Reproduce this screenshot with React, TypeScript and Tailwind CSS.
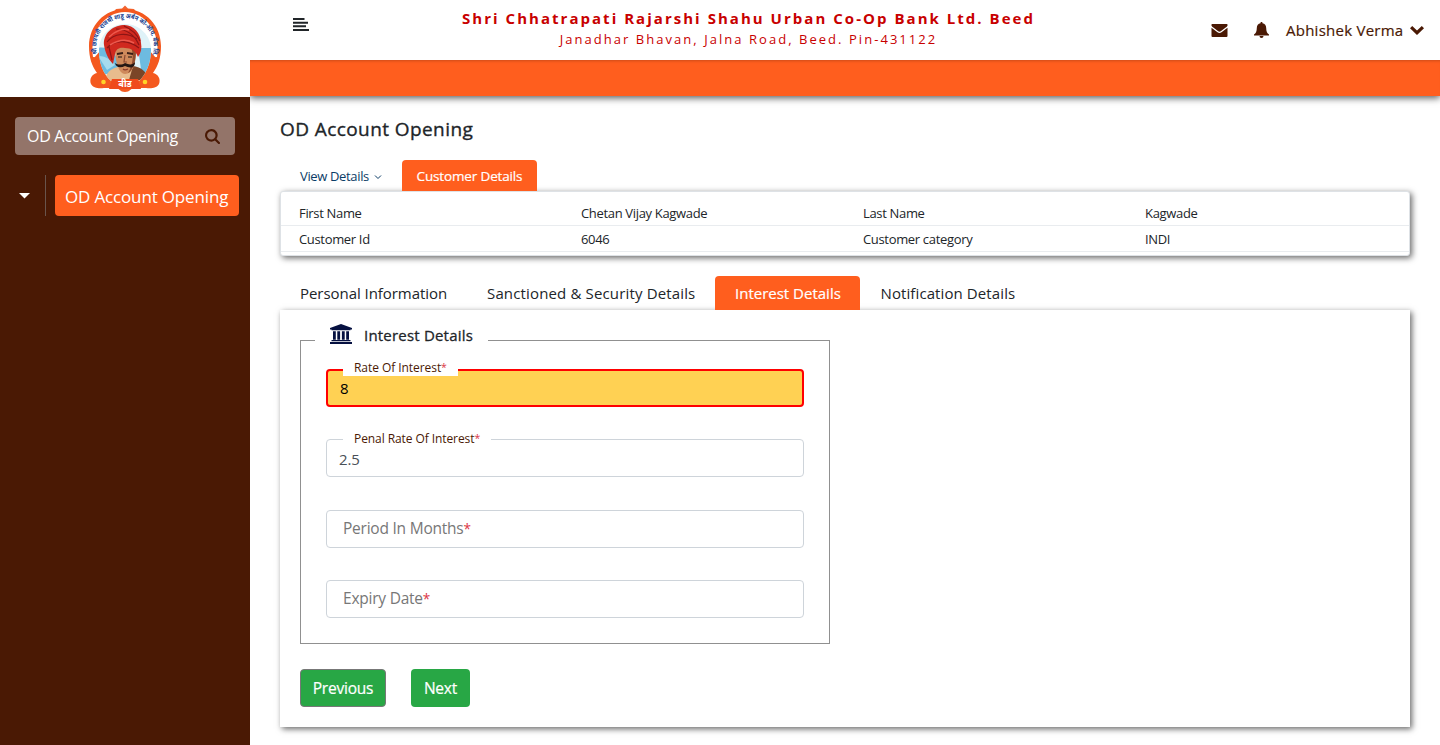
import type { ReactNode } from "react";

function Glyph({ className, viewBox, children }: { className: string; viewBox: string; children: ReactNode }) {
  return (
    <svg className={className} viewBox={viewBox} fill="currentColor">
      {children}
    </svg>
  );
}

function Logo() {
  return (
    <svg width="74" height="90" viewBox="0 0 74 90" overflow="visible">
      <path d="M37 1.500l3 3 6 .500 3 4H25l3-4 6-.500z" fill="#f26430" />
      <path
        d="M37 5C16 5 1 22 1 42c0 12 3 20 8 27-5 1-8 6-6 11 2 4 8 5 13 4h12c3 0 4 4 9 4s6-4 9-4h12c5 1 11 0 13-4 2-5-1-10-6-11 5-7 8-15 8-27C73 22 58 5 37 5z"
        fill="#f4591f"
      />
      <path d="M5 53C1 28 17 8 37 8s36 20 32 45l-9 1H14z" fill="#fff" />
      <path d="M6 54l7-8 4 26C11 68 7 61 6 54zM68 54l-7-8-4 26c6-4 10-11 11-18z" fill="#f4591f" />
      <clipPath id="portrait">
        <path d="M11 46c0-15 12-26 26-26s26 11 26 26c0 13-5 24-12 31H23C15 70 11 59 11 46z" />
      </clipPath>
      <g clipPath="url(#portrait)">
        <rect x="10" y="18" width="54" height="60" fill="#dff2f8" />
        <path d="M10 44c10-2 16 4 20 12v14H10zM50 44h14v26l-10 2z" fill="#6dbbe0" />
        <path d="M10 52c8 0 13 4 17 9l-8 5z" fill="#a7dbed" />
        <path d="M16 78c2-9 6-13 14-15l8 6 9-5c8 2 13 6 15 15z" fill="#e8bc8d" />
        <path d="M45 62c7 1 13 4 16 14H41z" fill="#7b4527" />
        <path d="M27 44c0-5 5-7 10-7s11 3 11 10c0 14-4 23-11 23-6 0-10-12-10-26z" fill="#cf8a5c" />
        <path d="M43 43c3 8 2 17-3 26 5-2 8-12 8-23z" fill="#8f4c2e" />
        <path d="M29 50l6-1M39 49l6 1" stroke="#3a1d16" strokeWidth="1.800" />
        <path d="M30 53h4M40 53h4" stroke="#1f1412" strokeWidth="1.200" />
        <path d="M37 51l-1 7h3" fill="none" stroke="#8d4930" strokeWidth="1.200" />
        <path d="M27 59c3 2 7 2 10 0 4 2 8 2 10-1 0 7-6 6-10 4-4 2-9 2-10-3z" fill="#241714" />
        <path d="M35 65c1 1 3 1 5 0" stroke="#8d3b2b" strokeWidth="1.200" fill="none" />
      </g>
      <path
        d="M16 41c-1-11 8-19 19-20 10-1 18 8 18 18 1 5 0 10-3 14-2-6-7-9-13-9-6-1-9 1-10 6l-2 10c-5-5-8-12-9-19z"
        fill="#d0291f"
      />
      <path d="M19 38c7-9 20-10 30-3M19 44c8-9 22-8 32 0M28 25c9 0 18 5 23 16M36 22c7 3 13 8 16 15M21 43l3 13" fill="none" stroke="#8d1515" strokeWidth="1.200" />
      <path d="M21 33c6-6 14-9 20-7M22 41c8-5 17-6 24-2" fill="none" stroke="#ee594d" strokeWidth="1.500" />
      <path id="arc" d="M9.500 51A28.700 28.700 0 1 1 64.500 51" fill="none" />
      <text fill="#173f91" fontSize="6.500" fontWeight="700" fontFamily="Noto Sans, sans-serif">
        <textPath href="#arc" startOffset="1" textLength="106" lengthAdjust="spacingAndGlyphs">
          श्री छत्रपती राजर्षी शाहू अर्बन को-ऑप. बँक लि.
        </textPath>
      </text>
      <circle cx="15.500" cy="78" r="2.300" fill="#ffd528" />
      <circle cx="57" cy="78" r="2.300" fill="#ffd528" />
      <path d="M24 75h26l3 10H21z" fill="#ef4a1b" />
      <text x="37" y="83" textAnchor="middle" fill="#fff" fontSize="9" fontWeight="700" fontFamily="Noto Sans, sans-serif">
        बीड
      </text>
    </svg>
  );
}

function Sidebar() {
  return (
    <aside className="relative z-20 flex w-[250px] shrink-0 flex-col bg-[#4a1904]">
      <div className="flex h-[97px] justify-center bg-white pt-[4px]">
        <Logo />
      </div>
      <div className="mx-[15px] mt-[20px] flex h-[38px] items-center justify-between rounded bg-[#937469] pr-[15px] pl-[12px] text-[16px] text-white">
        <span className="tracking-[-0.300px]">OD Account Opening</span>
        <Glyph className="size-[15px] text-[#4a1904]" viewBox="0 0 15 15">
          <path d="M6.300 0a6.300 6.300 0 1 0 3.600 11.500l3.300 3.200a1 1 0 0 0 1.500-1.500l-3.200-3.300A6.300 6.300 0 0 0 6.300 0zm0 2.200a4.200 4.200 0 1 1 0 8.400 4.200 4.200 0 0 1 0-8.400z" />
        </Glyph>
      </div>
      <div className="mt-[20px] flex h-[41px]">
        <div className="flex w-[46px] items-center border-r border-[#69544c] pl-[19px]">
          <svg width="11" height="6" viewBox="0 0 11 6">
            <path d="M0 0h11L5.500 5.500z" fill="#fff" />
          </svg>
        </div>
        <button className="ml-[9px] flex w-[184px] items-center rounded bg-[#ff5e1e] pt-[3px] pl-[10px] text-[17px] tracking-[-0.160px] whitespace-nowrap text-white">
          OD Account Opening
        </button>
      </div>
    </aside>
  );
}

function Header() {
  return (
    <header className="relative z-10 shadow-[0_2px_7px_rgba(0,0,0,0.65)]">
      <div className="flex h-[60px] items-start bg-white">
        <Glyph className="mt-[18px] ml-[43px] h-[13px] w-[16px] text-[#212529]" viewBox="0 0 16 13">
          <path d="M0 0h11.500v2H0zM0 3.700h15v2H0zM0 7.300h13v2H0zM0 11h16v2H0z" />
        </Glyph>
        <div className="ml-[152px] flex w-[575px] flex-col items-center pt-[8px] whitespace-nowrap text-[#c80000]">
          <b className="text-[15px] leading-[21px] tracking-[2.030px]">Shri Chhatrapati Rajarshi Shahu Urban Co-Op Bank Ltd. Beed</b>
          <span className="text-[13px] leading-[21px] tracking-[2.040px]">Janadhar Bhavan, Jalna Road, Beed. Pin-431122</span>
        </div>
        <div className="ml-auto flex h-[60px] items-center pr-[16px] text-[#4a1904]">
          <Glyph className="mr-[26px] h-[13px] w-[17px]" viewBox="0 0 16 13">
            <path d="M1 0h14a1 1 0 0 1 1 1.500c-.300.900-1 1.500-1.800 2.100L9.300 7.200c-.8.600-1.800.600-2.600 0L1.800 3.600C1 3 .3 2.400 0 1.500A1 1 0 0 1 1 0z" />
            <path d="M0 3.800l6 4.500c1.200.9 2.800.9 4 0l6-4.500V12a1 1 0 0 1-1 1H1a1 1 0 0 1-1-1z" />
          </Glyph>
          <Glyph className="mr-[17px] h-[16px] w-[15px]" viewBox="0 0 15 16">
            <path d="M7.500 0c.700 0 1.100.500 1 1.200 2.300.4 3.700 2.300 3.700 4.800 0 3.500 1 5.400 2.800 6.500v1H0v-1C1.800 11.400 2.800 9.500 2.800 6c0-2.500 1.400-4.400 3.700-4.800C6.400.5 6.800 0 7.500 0zM5.500 14h4a2 2 0 0 1-4 0z" />
          </Glyph>
          <span className="w-[118px] text-[15px] tracking-[0.250px] whitespace-nowrap [-webkit-text-stroke:0.200px]">Abhishek Verma</span>
          <Glyph className="ml-[6px] h-[9px] w-[14px]" viewBox="0 0 14 9">
            <path d="M7 9L0 2.300 2.200 0 7 4.600 11.800 0 14 2.300z" />
          </Glyph>
        </div>
      </div>
      <div className="h-[36px] bg-[#ff5e1e] shadow-[inset_0_3px_3px_-2px_rgba(0,0,0,0.2)]" />
    </header>
  );
}

function CustomerPanel() {
  const rows = [
    ["First Name", "Chetan Vijay Kagwade", "Last Name", "Kagwade"],
    ["Customer Id", "6046", "Customer category", "INDI"],
  ];
  return (
    <section className="mt-[17px]">
      <div className="flex h-[31px]">
        <div className="flex w-[122px] items-center pt-[2px] pl-[20px] text-[13px] tracking-[-0.350px] text-[#0b3c66]">
          View Details
          <svg className="ml-[5px]" width="8" height="6" viewBox="0 0 8 6" fill="none" stroke="#0b3c66">
            <path d="M1 1.500l3 3 3-3" />
          </svg>
        </div>
        <div className="flex w-[135px] items-center justify-center rounded-t bg-[#ff5e1e] pt-[2px] text-[13.500px] tracking-[-0.150px] text-white [-webkit-text-stroke:0.200px]">
          Customer Details
        </div>
      </div>
      <div className="h-[65px] rounded-[3px] border border-[#dee2e6] bg-white pt-[8px] text-[13px] shadow-[2px_2px_6px_rgba(0,0,0,0.6)]">
        {rows.map((row) => (
          <div
            key={row[0]}
            className="grid h-[26px] grid-cols-[282px_282px_282px_1fr] items-center border-b border-[#e9ecef] pt-[2px] pl-[18px] tracking-[-0.330px]"
          >
            {row.map((cell) => (
              <span key={cell}>{cell}</span>
            ))}
          </div>
        ))}
      </div>
    </section>
  );
}

function Star() {
  return <span className="text-[0.880em] text-[#dc3545]">*</span>;
}

function FilledField({ label, value, invalid = false }: { label: string; value: string; invalid?: boolean }) {
  return (
    <div
      className={
        invalid
          ? "relative flex h-[38px] items-center rounded border-2 border-[#ff0000] bg-[#ffd153] pt-[1px] pl-[12px] text-[15px] text-black"
          : "relative flex h-[38px] items-center rounded border border-[#ced4da] bg-white pt-[2px] pl-[12px] text-[15px] tracking-[-0.100px] text-[#495057]"
      }
    >
      <span
        className={
          invalid
            ? "absolute top-[-12px] left-[15px] flex h-[17px] w-[115px] items-center bg-white pl-[11px] text-[12px] tracking-[-0.060px] text-[#4a1904]"
            : "absolute top-[-10px] left-[16px] flex h-[17px] w-[148px] items-center bg-white pl-[11px] text-[12px] tracking-[-0.080px] text-[#4a1904]"
        }
      >
        {label}
        <Star />
      </span>
      {value}
    </div>
  );
}

function EmptyField({ label }: { label: string }) {
  return (
    <div className="flex h-[38px] items-center rounded border border-[#ced4da] pl-[16px] text-[15.500px] tracking-[-0.230px] text-[#777]">
      {label}
      <Star />
    </div>
  );
}

function InterestPanel() {
  return (
    <section className="mt-[20px]">
      <div className="flex h-[34px] text-[15px] whitespace-nowrap">
        <div className="flex w-[187px] items-center pt-[1px] pl-[20px] tracking-[-0.050px]">Personal Information</div>
        <div className="flex w-[248px] items-center pt-[1px] pl-[20px] tracking-[0.150px]">Sanctioned &amp; Security Details</div>
        <div className="flex w-[145px] items-center rounded-t bg-[#ff5e1e] pt-[1px] pl-[20px] text-white [-webkit-text-stroke:0.200px]">
          Interest Details
        </div>
        <div className="flex items-center pt-[1px] pl-[20.500px] tracking-[0.100px]">Notification Details</div>
      </div>
      <div className="h-[417px] bg-white px-[20px] pt-[30px] shadow-[2px_2px_6px_rgba(0,0,0,0.6)]">
        <div className="relative flex h-[304px] w-[530px] flex-col border border-[#909090] px-[25px] pt-[28px]">
          <h2 className="absolute top-[-20px] left-[14px] flex h-[28px] w-[173px] items-center bg-white pl-[15px] text-[15px] tracking-[0.200px] whitespace-nowrap [-webkit-text-stroke:0.300px]">
            <Glyph className="mt-[-3px] mr-[12px] h-[20px] w-[22px] text-[#061141]" viewBox="0 0 22 20">
              <path d="M11 0l11 4v1.500h-1.500v.8h-19v-.8H0V4zM3 7.300h2.800v8.500H3zM7.300 7.300h2.800v8.500H7.300zM11.900 7.300h2.800v8.500h-2.800zM16.200 7.300H19v8.500h-2.800zM1.500 16h19v1.300h-19zM0 18h22v2H0z" />
            </Glyph>
            Interest Details
          </h2>
          <FilledField label="Rate Of Interest" value="8" invalid />
          <div className="h-[32px]" />
          <FilledField label="Penal Rate Of Interest" value="2.5" />
          <div className="h-[33px]" />
          <EmptyField label="Period In Months" />
          <div className="h-[32px]" />
          <EmptyField label="Expiry Date" />
        </div>
        <div className="mt-[25px] flex gap-[25px] text-[15.500px] tracking-[-0.200px] text-white [-webkit-text-stroke:0.200px]">
          <button className="h-[38px] w-[86px] rounded border border-[#777] bg-[#28a745] pt-[1px]">Previous</button>
          <button className="h-[38px] w-[59px] rounded bg-[#28a745] pt-[1px]">Next</button>
        </div>
      </div>
    </section>
  );
}

export default function App() {
  return (
    <div className="flex h-[745px] w-[1440px] overflow-hidden bg-white font-['Open_Sans','Noto_Sans',sans-serif] text-[#212529]">
      <Sidebar />
      <div className="min-w-0 flex-1">
        <Header />
        <main className="px-[30px] pt-[19px]">
          <h1 className="h-[28px] text-[19px] leading-[28px] tracking-[0.420px] [-webkit-text-stroke:0.350px]">OD Account Opening</h1>
          <CustomerPanel />
          <InterestPanel />
        </main>
      </div>
    </div>
  );
}
